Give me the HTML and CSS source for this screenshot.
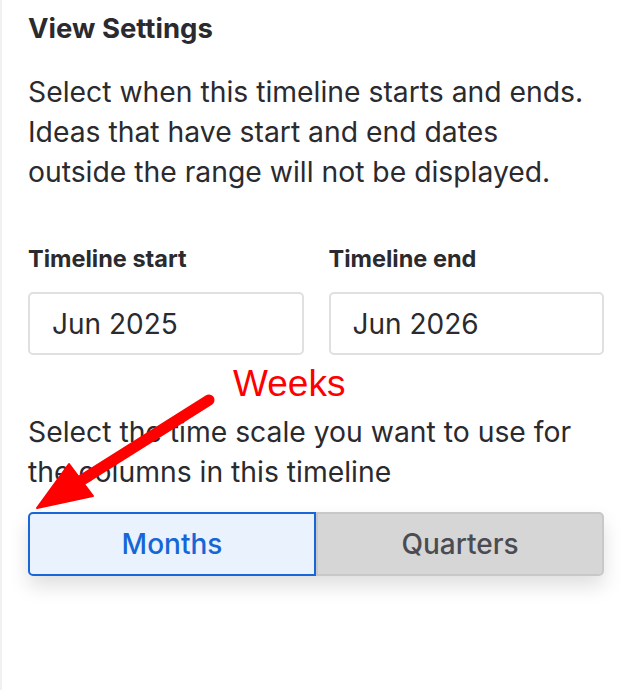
FILE: index.html
```html
<!DOCTYPE html>
<html lang="en">
<head>
<meta charset="utf-8">
<title>View Settings</title>
<link rel="stylesheet" href="styles.css">
</head>
<body>
<div class="panel">
  <h2 class="title">View Settings</h2>
  <p class="desc">Select when this timeline starts and ends. Ideas that have start and end dates outside the range will not be displayed.</p>
  <div class="range">
    <div class="field">
      <label class="label">Timeline start</label>
      <div class="input">Jun 2025</div>
    </div>
    <div class="field">
      <label class="label">Timeline end</label>
      <div class="input">Jun 2026</div>
    </div>
  </div>
  <p class="desc desc-scale">Select the time scale you want to use for the columns in this timeline</p>
  <div class="seg">
    <button class="seg-btn seg-active">Months</button>
    <button class="seg-btn">Quarters</button>
  </div>
  <div class="note">Weeks</div>
  <svg class="arrow" width="630" height="690" viewBox="0 0 630 690">
    <line x1="207" y1="400" x2="80" y2="480" stroke="#ff0000" stroke-width="11" stroke-linecap="round"/>
    <polygon points="35,508 67,464 91,496" fill="#ff0000" stroke="#ff0000" stroke-width="2" stroke-linejoin="round"/>
  </svg>
</div>
</body>
</html>
```
FILE: styles.css
```css
html, body {
  margin: 0;
  padding: 0;
  background: #ffffff;
}
body {
  font-family: Inter, "Noto Sans", sans-serif;
  color: #2a2a2f;
}
.panel {
  position: relative;
  width: 630px;
  height: 690px;
  box-sizing: border-box;
  padding: 12px 26px 0 26px;
  border-left: 2px solid #f1f1f1;
}
.title {
  margin: 0;
  font-size: 27.5px;
  font-weight: 700;
  line-height: 32px;
}
.desc {
  margin: 28px 0 0;
  font-size: 28.3px;
  line-height: 40px;
  font-weight: 400;
}
.range {
  display: grid;
  grid-template-columns: 1fr 1fr;
  column-gap: 25px;
  margin-top: 53px;
}
.field {
  display: flex;
  flex-direction: column;
}
.label {
  font-size: 23.5px;
  font-weight: 700;
  line-height: 28px;
}
.input {
  margin-top: 19px;
  height: 63px;
  box-sizing: border-box;
  border: 2px solid #e0e0e0;
  border-radius: 5px;
  padding-left: 22px;
  display: flex;
  align-items: center;
  font-size: 28px;
}
.desc-scale {
  margin-top: 57px;
}
.seg {
  display: flex;
  margin-top: 20px;
  height: 64px;
  border-radius: 5px;
  box-shadow: 0 10px 20px rgba(0, 0, 0, 0.13);
}
.seg-btn {
  flex: 1;
  margin: 0;
  font-family: inherit;
  font-size: 28px;
  font-weight: 500;
  border: 2px solid #c8c8c8;
  background: #d6d6d6;
  color: #4b4b52;
  border-radius: 0 5px 5px 0;
  padding: 0;
}
.seg-active {
  border-color: #1a66d8;
  background: #eaf2fe;
  color: #1766d6;
  border-radius: 5px 0 0 5px;
}
.note {
  position: absolute;
  left: 231px;
  top: 363px;
  font-family: "Liberation Sans", Arial, sans-serif;
  font-size: 37px;
  line-height: 42px;
  color: #ff0000;
}
.arrow {
  position: absolute;
  left: 0;
  top: 0;
  pointer-events: none;
}
```
